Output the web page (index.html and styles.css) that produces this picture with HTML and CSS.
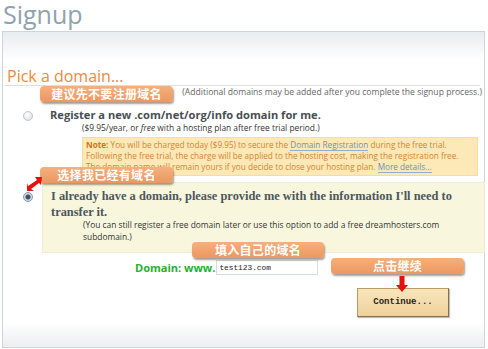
FILE: index.html
```html
<!DOCTYPE html>
<html lang="zh-CN">
<head>
  <meta charset="UTF-8">
  <title>Signup</title>
  <link rel="stylesheet" href="styles.css">
</head>
<body>
  <h1 class="title">Signup</h1>

  <div class="panel">
    <h2 class="pick">Pick a domain...</h2>
    <p class="extra">(Additional domains may be added after you complete the signup process.)</p>

    <div class="option">
      <span class="radio"></span>
      <div class="option-body">
        <div class="option-title">Register a new .com/net/org/info domain for me.</div>
        <div class="option-sub">($9.95/year, or <em>free</em> with a hosting plan after free trial period.)</div>
        <div class="note">
          <b>Note:</b> You will be charged today ($9.95) to secure the <a href="#">Domain Registration</a> during the free trial.<br>
          Following the free trial, the charge will be applied to the hosting cost, making the registration free.<br>
          The domain name will remain yours if you decide to close your hosting plan. <a href="#">More details...</a>
        </div>
      </div>
    </div>

    <div class="option option-on">
      <span class="radio radio-on"></span>
      <div class="option-body selected">
        <div class="option-title serif">I already have a domain, please provide me with the information I'll need to<br>transfer it.</div>
        <div class="option-sub tight">(You can still register a free domain later or use this option to add a free dreamhosters.com<br>subdomain.)</div>
      </div>
    </div>

    <div class="domain-row">
      <label for="domain">Domain: www.</label>
      <input type="text" id="domain" value="test123.com">
    </div>

    <div class="actions">
      <button class="continue">Continue...</button>
    </div>

    <!-- callouts drawn over the form -->
    <span class="tip tip-1">建议先不要注册域名</span>
    <span class="tip tip-2">选择我已经有域名</span>
    <span class="tip tip-3">填入自己的域名</span>
    <span class="tip tip-4">点击继续</span>

    <svg class="arrow arrow-1" width="16" height="14" viewBox="0 0 16 14">
      <path d="M15 0 L8 0 L10 3 L1 9 L0 6 L0 14 L7 14 L4 12 L12 6 L14 8 Z" fill="#e3120f"/>
    </svg>
    <svg class="arrow arrow-2" width="12" height="16" viewBox="0 0 12 16">
      <path d="M3.5 0 H8.5 V9 H12 L6 16 L0 9 H3.5 Z" fill="#e3120f"/>
    </svg>
  </div>
</body>
</html>
```

FILE: styles.css
```css
body {
  margin: 0;
  padding: 0;
  background-color: #fff;
  font-family: "Open Sans", "Noto Sans", sans-serif;
  color: #555;
}

.title {
  margin: 0 0 2px 3px;
  font-size: 25px;
  line-height: 29px;
  font-weight: 400;
  color: #8ea3ad;
}

.panel {
  position: relative;
  margin-left: 2px;
  width: 481px;
  height: 315px;
  border: 1px solid #cbd5da;
  background: linear-gradient(#e8ecee, #fff 28px, #fff 290px, #eceeef);
}

.pick {
  margin: 35px 4px 0 2px;
  padding-left: 2px;
  font-size: 16px;
  line-height: 18px;
  font-weight: 400;
  color: #ec8a3e;
  border-bottom: 1px solid #dedede;
}

.extra {
  margin: 0;
  padding-right: 2px;
  text-align: right;
  font-size: 8.6px;
  line-height: 12px;
  color: #666;
}

.option {
  display: flex;
  align-items: flex-start;
  margin-top: 9px;
}

.radio {
  flex: none;
  width: 8px;
  height: 8px;
  margin: 4px 9px 0 20px;
  border: 1px solid #c3c6c8;
  border-radius: 50%;
  background: radial-gradient(circle at 40% 35%, #fff, #d8dadb);
}

.radio-on {
  margin-top: 10px;
  border-color: #8a98a5;
  background: radial-gradient(circle, #3d5064 0, #3d5064 2px, #cfd8e0 3px);
}

.option-body {
  flex: none;
  width: 433px;
  padding-left: 8px;
}

.option-title {
  font-size: 11.1px;
  line-height: 15px;
  font-weight: 700;
  color: #484e55;
  white-space: nowrap;
}

.serif {
  font-family: "Liberation Serif", "DejaVu Serif", serif;
  font-size: 12.4px;
  line-height: 16px;
  color: #4c5660;
}

.option-sub {
  padding-left: 32px;
  font-size: 8.4px;
  line-height: 12px;
  color: #333;
  white-space: nowrap;
}

.tight {
  margin-top: -1px;
}

.note {
  margin: 3px 0 0 32px;
  width: 387px;
  padding: 1px 4px 3px 3px;
  font-size: 8.2px;
  line-height: 11px;
  color: #d5862e;
  background-color: #fde8b7;
  border: 1px solid #f7dba2;
  white-space: nowrap;
}

.note b {
  color: #d3741c;
}

.note a {
  color: #6b93b3;
  text-decoration: none;
  border-bottom: 1px solid #8fb0c8;
}

.option-on {
  margin-top: 6px;
}

.selected {
  padding: 5px 0 9px 8px;
  background-color: #f8f7de;
  border: 1px solid #efeed4;
}

.domain-row {
  display: flex;
  align-items: center;
  margin: 7px 0 0 132px;
}

.domain-row label {
  flex: none;
  font-size: 11px;
  font-weight: 700;
  color: #22b22b;
  white-space: nowrap;
}

.domain-row input {
  width: 96px;
  height: 13px;
  margin: 0 0 0 1px;
  padding: 0 2px;
  border: 1px solid #d8dde0;
  font-family: "Liberation Mono", monospace;
  font-size: 7.8px;
  color: #222;
}

.actions {
  margin: 12px 0 0 354px;
}

.continue {
  width: 92px;
  height: 29px;
  padding: 0;
  font-family: "Liberation Mono", monospace;
  font-size: 9px;
  font-weight: 700;
  color: #2a2418;
  background: linear-gradient(#f9e6bd, #eed19a);
  border: 1px solid #b99a61;
  border-right-color: #8a7143;
  border-bottom-color: #8a7143;
  box-shadow: 1px 1px 1px rgba(0, 0, 0, 0.25);
}

.tip {
  position: absolute;
  width: 133px;
  height: 16px;
  line-height: 16px;
  text-align: center;
  font-family: "Noto Sans CJK SC", sans-serif;
  font-size: 12px;
  font-weight: 700;
  letter-spacing: 0.3px;
  color: #fff;
  background: linear-gradient(#f5b07d, #ec9760);
  border-radius: 4px;
  box-shadow: 1px 2px 2px rgba(60, 40, 20, 0.45);
}

.tip-1 { left: 37px; top: 54px; }
.tip-2 { left: 37px; top: 135px; }
.tip-3 { left: 189px; top: 210px; width: 132px; }
.tip-4 { left: 328px; top: 226px; }

.arrow {
  position: absolute;
}

.arrow-1 { left: 24px; top: 145px; }
.arrow-2 { left: 393px; top: 244px; }
```
